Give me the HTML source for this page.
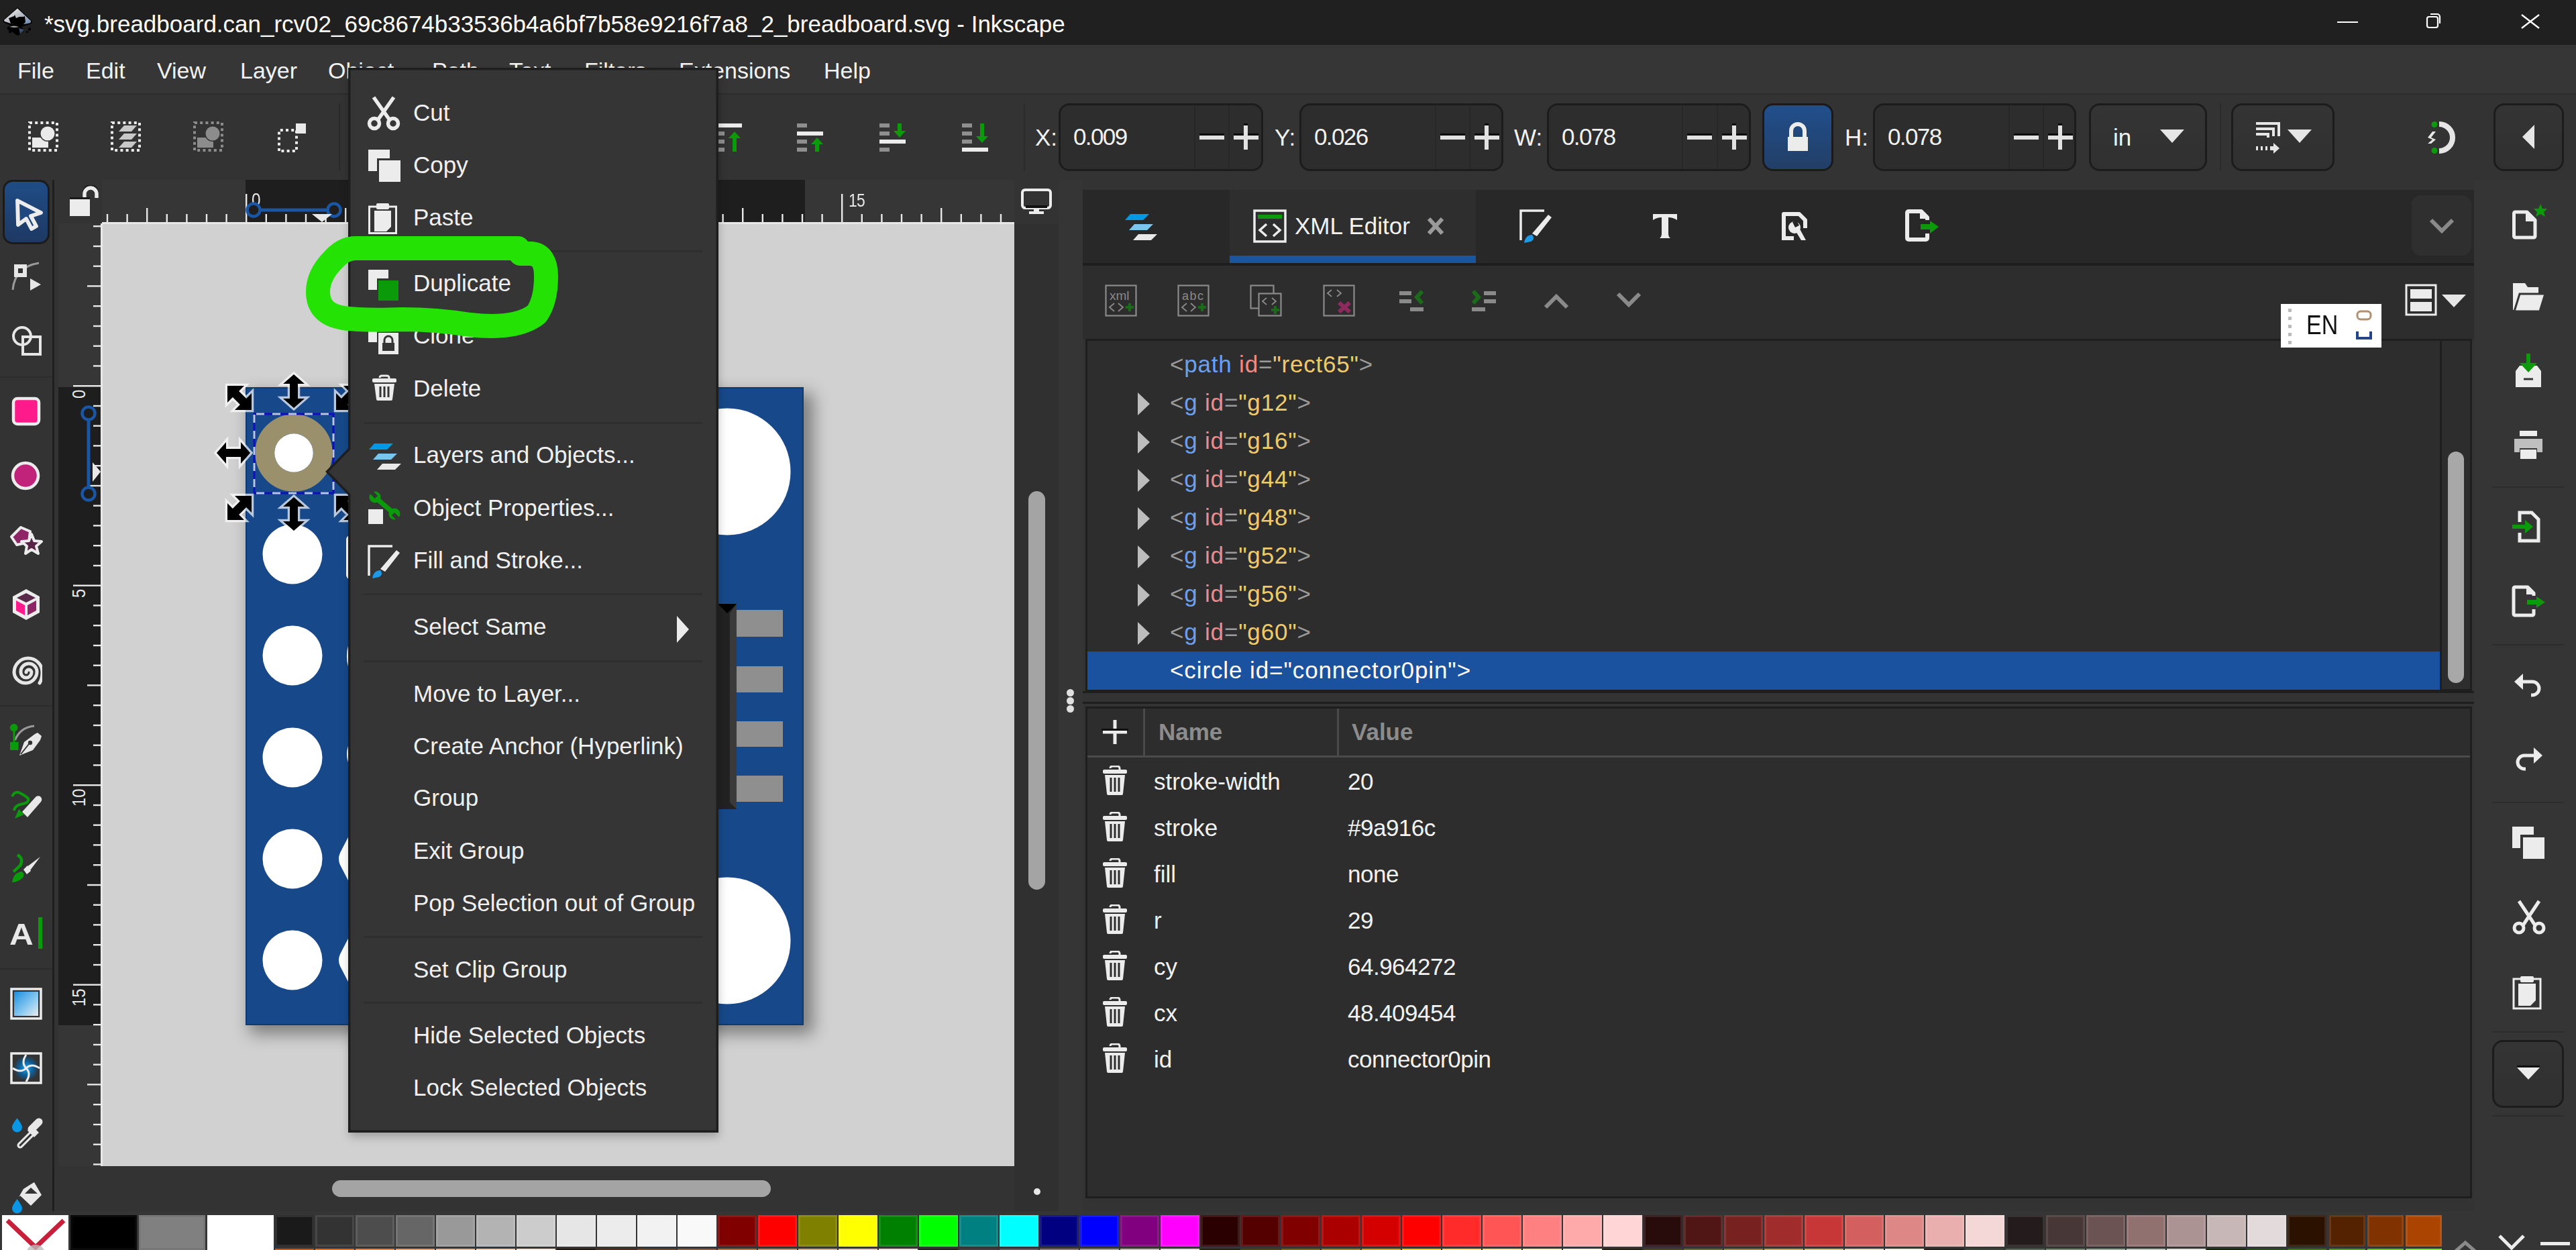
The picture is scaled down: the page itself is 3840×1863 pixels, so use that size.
<!DOCTYPE html><html><head><meta charset="utf-8"><style>
html,body{margin:0;padding:0;width:3840px;height:1863px;overflow:hidden;background:#333;position:relative;font-family:"Liberation Sans",sans-serif}
div{position:absolute;box-sizing:border-box}
.t{white-space:pre;font-family:"Liberation Sans",sans-serif}
</style></head><body>
<div style="left:0px;top:0px;width:3840px;height:67px;background:#202020"></div>
<div style="left:0px;top:67px;width:3840px;height:72px;background:#363636"></div>
<div style="left:0px;top:139px;width:3840px;height:2px;background:#2c2c2c"></div>
<div style="left:0px;top:141px;width:3840px;height:127px;background:#333333"></div>
<div style="left:0px;top:268px;width:78px;height:1537px;background:#333333"></div>
<div style="left:78px;top:268px;width:3px;height:1537px;background:#1f1f1f"></div>
<div style="left:81px;top:268px;width:71px;height:65px;background:#333333"></div>
<div style="left:152px;top:268px;width:1360px;height:65px;background:#363636"></div>
<div style="left:366px;top:268px;width:834px;height:65px;background:#1e1e1e"></div>
<div style="left:87px;top:333px;width:65px;height:1405px;background:#363636"></div>
<div style="left:87px;top:577px;width:65px;height:951px;background:#1e1e1e"></div>
<div style="left:152px;top:333px;width:1360px;height:1405px;background:#d1d1d1"></div>
<div style="left:1512px;top:268px;width:66px;height:1537px;background:#303030"></div>
<div style="left:1512px;top:268px;width:66px;height:66px;background:#333333"></div>
<div style="left:81px;top:1738px;width:1431px;height:67px;background:#333333"></div>
<div style="left:1578px;top:268px;width:36px;height:1543px;background:#353535"></div>
<div style="left:3688px;top:268px;width:152px;height:1543px;background:#353535"></div>
<div style="left:0px;top:1805px;width:3840px;height:58px;background:#353535"></div>
<div class="t" style="left:66px;top:18.4px;font-size:35px;line-height:35px;color:#ffffff;">*svg.breadboard.can_rcv02_69c8674b33536b4a6bf7b58e9216f7a8_2_breadboard.svg - Inkscape</div>
<div style="left:3484px;top:32px;width:31px;height:2px;background:#ffffff"></div>
<svg style="position:absolute;left:3615px;top:18px;" width="32" height="28" viewBox="0 0 32 28"><rect x="3" y="7" width="16" height="16" rx="3" fill="none" stroke="#fff" stroke-width="2.2"/><path d="M8 3 h10 a4 4 0 0 1 4 4 v10" fill="none" stroke="#fff" stroke-width="2.2"/></svg>
<svg style="position:absolute;left:3756px;top:20px;" width="32" height="24" viewBox="0 0 32 24"><path d="M3 2 L29 22 M29 2 L3 22" stroke="#fff" stroke-width="2.4"/></svg>
<div class="t" style="left:26px;top:88.2px;font-size:34px;line-height:34px;color:#f2f2f2;">File</div>
<div class="t" style="left:128px;top:88.2px;font-size:34px;line-height:34px;color:#f2f2f2;">Edit</div>
<div class="t" style="left:234px;top:88.2px;font-size:34px;line-height:34px;color:#f2f2f2;">View</div>
<div class="t" style="left:358px;top:88.2px;font-size:34px;line-height:34px;color:#f2f2f2;">Layer</div>
<div class="t" style="left:489px;top:88.2px;font-size:34px;line-height:34px;color:#f2f2f2;">Object</div>
<div class="t" style="left:644px;top:88.2px;font-size:34px;line-height:34px;color:#f2f2f2;">Path</div>
<div class="t" style="left:759px;top:88.2px;font-size:34px;line-height:34px;color:#f2f2f2;">Text</div>
<div class="t" style="left:871px;top:88.2px;font-size:34px;line-height:34px;color:#f2f2f2;">Filters</div>
<div class="t" style="left:1012px;top:88.2px;font-size:34px;line-height:34px;color:#f2f2f2;">Extensions</div>
<div class="t" style="left:1228px;top:88.2px;font-size:34px;line-height:34px;color:#f2f2f2;">Help</div>
<svg style="position:absolute;left:42px;top:181px;" width="45" height="45" viewBox="0 0 45 45"><rect x="2" y="2" width="41" height="41" fill="none" stroke="#eaeaea" stroke-width="4" stroke-dasharray="4 4.2"/><rect x="6" y="24" width="24" height="15" fill="#eaeaea"/><circle cx="29" cy="18" r="12" fill="#333"/><circle cx="29" cy="18" r="10.5" fill="#eaeaea"/></svg>
<svg style="position:absolute;left:165px;top:181px;" width="45" height="45" viewBox="0 0 45 45"><rect x="2" y="2" width="41" height="41" fill="none" stroke="#eaeaea" stroke-width="4" stroke-dasharray="4 4.2"/><path d="M12 15 L20 6 L39 6 L31 15 Z" fill="#c8c8c8"/><path d="M12 27 L20 18 L39 18 L31 27 Z" fill="#c8c8c8"/><path d="M12 39 L20 30 L39 30 L31 39 Z" fill="#c8c8c8"/></svg>
<svg style="position:absolute;left:288px;top:181px;" width="45" height="45" viewBox="0 0 45 45"><rect x="2" y="2" width="41" height="41" fill="none" stroke="#8c8c8c" stroke-width="4" stroke-dasharray="4 4.2"/><rect x="6" y="24" width="24" height="15" fill="#8c8c8c"/><circle cx="29" cy="18" r="12" fill="#333"/><circle cx="29" cy="18" r="10.5" fill="#8c8c8c"/></svg>
<svg style="position:absolute;left:412px;top:181px;" width="46" height="46" viewBox="0 0 46 46"><path d="M4 44 V13 H30 V44 Z" fill="none" stroke="#eaeaea" stroke-width="4" stroke-dasharray="4 4.2"/><rect x="29" y="3" width="15" height="15" fill="#eaeaea"/></svg>
<div style="left:505px;top:154px;width:2px;height:101px;background:#2b2b2b"></div>
<svg style="position:absolute;left:1066px;top:184px;" width="40" height="42" viewBox="0 0 40 42"><rect x="0" y="0" width="40" height="6" fill="#ececec"/><rect x="0" y="12" width="14" height="6" fill="#8f8f8f"/><rect x="0" y="24" width="14" height="6" fill="#8f8f8f"/><rect x="0" y="36" width="14" height="6" fill="#8f8f8f"/><path d="M20 22 L29 12 L38 22 Z" fill="#0a9a0a"/><rect x="26" y="21" width="6" height="21" fill="#0a9a0a"/></svg>
<svg style="position:absolute;left:1188px;top:184px;" width="40" height="42" viewBox="0 0 40 42"><rect x="0" y="0" width="15" height="6" fill="#8f8f8f"/><rect x="0" y="12" width="39" height="6" fill="#ececec"/><rect x="0" y="24" width="15" height="6" fill="#8f8f8f"/><rect x="0" y="36" width="15" height="6" fill="#8f8f8f"/><path d="M21 31 L30 21 L39 31 Z" fill="#0a9a0a"/><rect x="27" y="30" width="6" height="12" fill="#0a9a0a"/></svg>
<svg style="position:absolute;left:1311px;top:184px;" width="40" height="42" viewBox="0 0 40 42"><rect x="0" y="0" width="15" height="6" fill="#8f8f8f"/><rect x="0" y="12" width="15" height="6" fill="#8f8f8f"/><rect x="0" y="24" width="39" height="6" fill="#ececec"/><rect x="0" y="36" width="15" height="6" fill="#8f8f8f"/><path d="M21 11 L30 21 L39 11 Z" fill="#0a9a0a"/><rect x="27" y="0" width="6" height="12" fill="#0a9a0a"/></svg>
<svg style="position:absolute;left:1434px;top:184px;" width="40" height="42" viewBox="0 0 40 42"><rect x="0" y="0" width="15" height="6" fill="#8f8f8f"/><rect x="0" y="12" width="15" height="6" fill="#8f8f8f"/><rect x="0" y="24" width="15" height="6" fill="#8f8f8f"/><rect x="0" y="36" width="39" height="6" fill="#ececec"/><path d="M21 19 L30 29 L39 19 Z" fill="#0a9a0a"/><rect x="27" y="0" width="6" height="20" fill="#0a9a0a"/></svg>
<div style="left:1526px;top:154px;width:2px;height:101px;background:#2b2b2b"></div>
<div class="t" style="left:1543px;top:187.4px;font-size:35px;line-height:35px;color:#f2f2f2;">X:</div>
<div style="left:1578px;top:154px;width:305px;height:101px;background:#2d2d2d;border:3px solid #1c1c1c;border-radius:16px"></div>
<div style="left:1780px;top:157px;width:2px;height:95px;background:#272727"></div>
<div style="left:1831px;top:157px;width:2px;height:95px;background:#272727"></div>
<div class="t" style="left:1600px;top:186.4px;font-size:35px;line-height:35px;color:#f2f2f2;letter-spacing:-1.6px">0.009</div>
<div style="left:1788px;top:199px;width:37px;height:3px;background:#0a0a0a"></div>
<div style="left:1788px;top:202px;width:37px;height:6px;background:#e2e2e2"></div>
<div style="left:1839px;top:199px;width:37px;height:3px;background:#0a0a0a"></div>
<div style="left:1839px;top:202px;width:37px;height:6px;background:#e2e2e2"></div>
<div style="left:1854px;top:184px;width:6px;height:3px;background:#0a0a0a"></div>
<div style="left:1854px;top:187px;width:6px;height:36px;background:#e2e2e2"></div>
<div class="t" style="left:1900px;top:187.4px;font-size:35px;line-height:35px;color:#f2f2f2;">Y:</div>
<div style="left:1937px;top:154px;width:304px;height:101px;background:#2d2d2d;border:3px solid #1c1c1c;border-radius:16px"></div>
<div style="left:2139px;top:157px;width:2px;height:95px;background:#272727"></div>
<div style="left:2190px;top:157px;width:2px;height:95px;background:#272727"></div>
<div class="t" style="left:1959px;top:186.4px;font-size:35px;line-height:35px;color:#f2f2f2;letter-spacing:-1.6px">0.026</div>
<div style="left:2147px;top:199px;width:37px;height:3px;background:#0a0a0a"></div>
<div style="left:2147px;top:202px;width:37px;height:6px;background:#e2e2e2"></div>
<div style="left:2198px;top:199px;width:37px;height:3px;background:#0a0a0a"></div>
<div style="left:2198px;top:202px;width:37px;height:6px;background:#e2e2e2"></div>
<div style="left:2213px;top:184px;width:6px;height:3px;background:#0a0a0a"></div>
<div style="left:2213px;top:187px;width:6px;height:36px;background:#e2e2e2"></div>
<div class="t" style="left:2257px;top:187.4px;font-size:35px;line-height:35px;color:#f2f2f2;">W:</div>
<div style="left:2306px;top:154px;width:304px;height:101px;background:#2d2d2d;border:3px solid #1c1c1c;border-radius:16px"></div>
<div style="left:2507px;top:157px;width:2px;height:95px;background:#272727"></div>
<div style="left:2559px;top:157px;width:2px;height:95px;background:#272727"></div>
<div class="t" style="left:2328px;top:186.4px;font-size:35px;line-height:35px;color:#f2f2f2;letter-spacing:-1.6px">0.078</div>
<div style="left:2515px;top:199px;width:37px;height:3px;background:#0a0a0a"></div>
<div style="left:2515px;top:202px;width:37px;height:6px;background:#e2e2e2"></div>
<div style="left:2567px;top:199px;width:37px;height:3px;background:#0a0a0a"></div>
<div style="left:2567px;top:202px;width:37px;height:6px;background:#e2e2e2"></div>
<div style="left:2582px;top:184px;width:6px;height:3px;background:#0a0a0a"></div>
<div style="left:2582px;top:187px;width:6px;height:36px;background:#e2e2e2"></div>
<div style="left:2627px;top:154px;width:106px;height:101px;background:linear-gradient(#214f8c,#223e66);border:3px solid #1a1a1a;border-radius:16px"></div>
<svg style="position:absolute;left:2660px;top:182px;" width="40" height="46" viewBox="0 0 40 46"><path d="M10 22 V13 a10 10 0 0 1 20 0 V22" fill="none" stroke="#ececec" stroke-width="6"/><rect x="5" y="22" width="30" height="21" fill="#ececec"/></svg>
<div class="t" style="left:2750px;top:187.4px;font-size:35px;line-height:35px;color:#f2f2f2;">H:</div>
<div style="left:2792px;top:154px;width:303px;height:101px;background:#2d2d2d;border:3px solid #1c1c1c;border-radius:16px"></div>
<div style="left:2994px;top:157px;width:2px;height:95px;background:#272727"></div>
<div style="left:3045px;top:157px;width:2px;height:95px;background:#272727"></div>
<div class="t" style="left:2814px;top:186.4px;font-size:35px;line-height:35px;color:#f2f2f2;letter-spacing:-1.6px">0.078</div>
<div style="left:3002px;top:199px;width:37px;height:3px;background:#0a0a0a"></div>
<div style="left:3002px;top:202px;width:37px;height:6px;background:#e2e2e2"></div>
<div style="left:3053px;top:199px;width:37px;height:3px;background:#0a0a0a"></div>
<div style="left:3053px;top:202px;width:37px;height:6px;background:#e2e2e2"></div>
<div style="left:3068px;top:184px;width:6px;height:3px;background:#0a0a0a"></div>
<div style="left:3068px;top:187px;width:6px;height:36px;background:#e2e2e2"></div>
<div style="left:3114px;top:154px;width:176px;height:101px;background:linear-gradient(#343434,#303030);border:3px solid #1c1c1c;border-radius:16px"></div>
<div class="t" style="left:3150px;top:187.4px;font-size:35px;line-height:35px;color:#f2f2f2;">in</div>
<svg style="position:absolute;left:3218px;top:190px;" width="40" height="26" viewBox="0 0 40 26"><path d="M2 3 H38 L20 23 Z" fill="#e6e6e6"/></svg>
<div style="left:3309px;top:154px;width:2px;height:101px;background:#2b2b2b"></div>
<div style="left:3326px;top:154px;width:154px;height:101px;background:linear-gradient(#343434,#303030);border:3px solid #1c1c1c;border-radius:16px"></div>
<svg style="position:absolute;left:3361px;top:181px;" width="40" height="48" viewBox="0 0 40 48"><path d="M2 3 H36 V22 M2 11 H28 V22 M2 19 H20 V24" fill="none" stroke="#e6e6e6" stroke-width="4"/><path d="M2 40 H5 M9 40 H12 M16 40 H19 M23 40 H30" stroke="#e6e6e6" stroke-width="6"/><path d="M28 32 L37 40 L28 48 Z" fill="#e6e6e6"/></svg>
<svg style="position:absolute;left:3408px;top:190px;" width="40" height="26" viewBox="0 0 40 26"><path d="M2 3 H38 L20 23 Z" fill="#e6e6e6"/></svg>
<svg style="position:absolute;left:3600px;top:170px;" width="80" height="70" viewBox="0 0 80 70"><g transform="translate(-3600,-170)"><path d="M3636 185 A20 20 0 0 1 3636 225" fill="none" stroke="#e6e6e6" stroke-width="8"/><circle cx="3629" cy="185.5" r="4.5" fill="#0a9a0a"/><circle cx="3629" cy="224.5" r="4.5" fill="#0a9a0a"/><path d="M3626 196 L3631 196 L3624 205 L3631 208 L3624 214 L3619 214 L3626 208 L3619 205 Z" fill="#e6e6e6"/></g></svg>
<div style="left:3717px;top:154px;width:105px;height:101px;background:linear-gradient(#343434,#303030);border:3px solid #1c1c1c;border-radius:16px"></div>
<svg style="position:absolute;left:3758px;top:184px;" width="24" height="40" viewBox="0 0 24 40"><path d="M20 2 V38 L2 20 Z" fill="#e6e6e6"/></svg>
<div style="left:4px;top:268px;width:70px;height:96px;background:linear-gradient(#1f4c86,#1e3963);border:3px solid #1b1b1b;border-radius:15px"></div>
<svg style="position:absolute;left:21px;top:295px;" width="46" height="50" viewBox="0 0 46 50"><path d="M5 4 L40 22 L25 27 L33 42 L26 46 L18 31 L6 40 Z" fill="#1f4780" stroke="#ececec" stroke-width="5.8" stroke-linejoin="round"/></svg>
<div style="left:0px;top:561px;width:78px;height:2px;background:#2c2c2c"></div>
<div style="left:0px;top:1051px;width:78px;height:2px;background:#2c2c2c"></div>
<div style="left:0px;top:1443px;width:78px;height:2px;background:#2c2c2c"></div>
<svg style="position:absolute;left:16px;top:388px;" width="48" height="48" viewBox="0 0 48 48"><path d="M3 44 Q6 10 42 4" fill="none" stroke="#9a9a9a" stroke-width="3"/><rect x="8" y="9" width="13" height="13" fill="#333" stroke="#e6e6e6" stroke-width="6"/><path d="M29 27 L45 36 L29 45 Z" fill="#e6e6e6"/></svg>
<svg style="position:absolute;left:16px;top:484px;" width="48" height="48" viewBox="0 0 48 48"><circle cx="17" cy="17" r="13" fill="none" stroke="#e6e6e6" stroke-width="4"/><rect x="18" y="18" width="26" height="26" fill="none" stroke="#e6e6e6" stroke-width="4"/></svg>
<svg style="position:absolute;left:16px;top:590px;" width="46" height="46" viewBox="0 0 46 46"><rect x="4" y="4" width="38" height="38" rx="6" fill="#ff1a8c" stroke="#ececec" stroke-width="4.5"/></svg>
<svg style="position:absolute;left:15px;top:686px;" width="46" height="46" viewBox="0 0 46 46"><circle cx="23" cy="23" r="19" fill="#c2237a" stroke="#ececec" stroke-width="4.5"/></svg>
<svg style="position:absolute;left:13px;top:782px;" width="52" height="46" viewBox="0 0 52 46"><path d="M4 18 L18 4 L32 10 L30 26 L12 30 Z" fill="#8f2466" stroke="#ececec" stroke-width="4" stroke-linejoin="round"/><path d="M34 14 L38 24 L49 25 L41 32 L44 43 L34 37 L25 43 L27 32 L19 25 L30 24 Z" fill="#5a2245" stroke="#ececec" stroke-width="4" stroke-linejoin="round"/></svg>
<svg style="position:absolute;left:15px;top:875px;" width="48" height="52" viewBox="0 0 48 52"><path d="M24 3 L44 14 V38 L24 49 L4 38 V14 Z" fill="#ececec"/><path d="M24 9 L38 16 L24 23 L10 16 Z" fill="#5a2a4a"/><path d="M9 20 L22 27 V42 L9 35 Z" fill="#ff1a8c"/><path d="M39 20 L26 27 V42 L39 35 Z" fill="#8f2466"/></svg>
<svg style="position:absolute;left:15px;top:978px;" width="48" height="44" viewBox="0 0 48 44"><path d="M22 22 m0 0 a4 4 0 0 1 8 0 a8 8 0 0 1 -16 0 a12 12 0 0 1 24 -2 a17 17 0 0 1 -34 2 a21 21 0 0 1 42 0 q0 10 -4 16" fill="none" stroke="#e6e6e6" stroke-width="5" stroke-linecap="round" transform="translate(2,2)"/></svg>
<svg style="position:absolute;left:0px;top:1060px;" width="80" height="360" viewBox="0 0 80 360"><g transform="translate(0,-1060)"><path d="M22.5 1103 Q30 1084 51 1082" fill="none" stroke="#9a9a9a" stroke-width="3"/><circle cx="20.7" cy="1084.5" r="5.8" fill="#0a9a0a"/><rect x="19.5" y="1084" width="3" height="24" fill="#0a9a0a"/><rect x="15" y="1106" width="12.5" height="12" fill="#0a9a0a"/><path d="M29 1126 L36 1106 L52 1094 L56 1092 L62 1097 L60 1103 L49 1118 Z" fill="#e8e8e8"/><path d="M31 1124 L43 1109" stroke="#333" stroke-width="2"/><circle cx="45" cy="1107" r="3.2" fill="#333"/><path d="M18 1187 Q22 1178 30 1182 Q38 1186 42 1190 Q44 1196 34 1198 Q22 1200 21 1208" fill="none" stroke="#0a9a0a" stroke-width="4"/><path d="M33 1210 L53 1188 a5 5 0 0 1 8 7 L41 1218 Z" fill="#e8e8e8"/><path d="M22 1220 L28 1206 L36 1214 Z" fill="#0a9a0a"/><path d="M26 1274 Q36 1280 30 1290 Q24 1296 20 1299" fill="none" stroke="#0a9a0a" stroke-width="4.5"/><path d="M40 1292 L60 1277 L45 1297 Z" fill="#e8e8e8"/><path d="M35 1296 L41 1290 L46 1298 L40 1303 Z" fill="#e8e8e8"/><path d="M18 1315 Q20 1300 33 1299 Q38 1304 33 1309 Q26 1315 18 1315 Z" fill="#0a9a0a"/></g></svg>
<div class="t" style="left:14px;top:1369.9px;font-size:45px;line-height:45px;color:#e8e8e8;font-weight:bold;transform:scaleX(1.1);transform-origin:0 0">A</div>
<div style="left:57px;top:1367px;width:6px;height:47px;background:#0a9a0a"></div>
<svg style="position:absolute;left:15px;top:1472px;" width="48" height="48" viewBox="0 0 48 48"><rect x="2" y="2" width="44" height="44" fill="none" stroke="#ececec" stroke-width="3.5"/><defs><linearGradient id="gg" x1="0" y1="0" x2="1" y2="1"><stop offset="0" stop-color="#1a8fe0"/><stop offset="0.6" stop-color="#8ecbf0"/><stop offset="1" stop-color="#ececec"/></linearGradient></defs><rect x="6" y="6" width="36" height="36" fill="url(#gg)"/></svg>
<svg style="position:absolute;left:15px;top:1568px;" width="48" height="48" viewBox="0 0 48 48"><rect x="2" y="2" width="44" height="44" fill="none" stroke="#ececec" stroke-width="3.5"/><defs><radialGradient id="mg"><stop offset="0" stop-color="#1ea0f0"/><stop offset="0.6" stop-color="#0f5a90"/><stop offset="1" stop-color="#333"/></radialGradient></defs><rect x="5" y="5" width="38" height="38" fill="url(#mg)"/><path d="M24 4 Q16 16 24 24 Q32 32 24 44 M4 24 Q16 32 24 24 Q32 16 44 24" fill="none" stroke="#ececec" stroke-width="3"/></svg>
<svg style="position:absolute;left:0px;top:1650px;" width="80" height="160" viewBox="0 0 80 160"><path d="M25.5 16.5 Q18 26 18 30 a7.5 7.5 0 0 0 15 0 Q33 26 25.5 16.5 Z" fill="#0a96e6"/><path d="M30 57 L50 37" stroke="#e8e8e8" stroke-width="9" stroke-linecap="round"/><path d="M30 57 L50 37" stroke="#333" stroke-width="3" stroke-linecap="round"/><path d="M41 35 L48 28 L58 38 L51 45 Z" fill="#e8e8e8"/><path d="M47 33 L58 22" stroke="#e8e8e8" stroke-width="11" stroke-linecap="round"/><path d="M46 115 L51 112 L62 131 L46 147 L30 132 L28 134 L35 122 Z" fill="#e8e8e8"/><path d="M37 129 L46 120 L56 129 Z" fill="#333"/><path d="M25.5 137 Q18 147 18 151 a7.5 7.5 0 0 0 15 0 Q33 147 25.5 137 Z" fill="#0a96e6"/></svg>
<svg style="position:absolute;left:152px;top:268px;" width="1360" height="65" viewBox="0 0 1360 65"><rect x="6.8" y="51" width="2.4" height="13" fill="#e8e8e8"/><rect x="36.4" y="51" width="2.4" height="13" fill="#e8e8e8"/><rect x="66.0" y="42" width="2.4" height="22" fill="#e8e8e8"/><rect x="95.6" y="51" width="2.4" height="13" fill="#e8e8e8"/><rect x="125.2" y="51" width="2.4" height="13" fill="#e8e8e8"/><rect x="154.8" y="51" width="2.4" height="13" fill="#e8e8e8"/><rect x="184.4" y="51" width="2.4" height="13" fill="#e8e8e8"/><rect x="214.0" y="21" width="2.4" height="43" fill="#e8e8e8"/><rect x="243.6" y="51" width="2.4" height="13" fill="#e8e8e8"/><rect x="273.2" y="51" width="2.4" height="13" fill="#e8e8e8"/><rect x="302.8" y="51" width="2.4" height="13" fill="#e8e8e8"/><rect x="332.4" y="51" width="2.4" height="13" fill="#e8e8e8"/><rect x="362.0" y="42" width="2.4" height="22" fill="#e8e8e8"/><rect x="391.6" y="51" width="2.4" height="13" fill="#e8e8e8"/><rect x="421.2" y="51" width="2.4" height="13" fill="#e8e8e8"/><rect x="450.8" y="51" width="2.4" height="13" fill="#e8e8e8"/><rect x="480.4" y="51" width="2.4" height="13" fill="#e8e8e8"/><rect x="510.0" y="21" width="2.4" height="43" fill="#e8e8e8"/><rect x="539.6" y="51" width="2.4" height="13" fill="#e8e8e8"/><rect x="569.2" y="51" width="2.4" height="13" fill="#e8e8e8"/><rect x="598.8" y="51" width="2.4" height="13" fill="#e8e8e8"/><rect x="628.4" y="51" width="2.4" height="13" fill="#e8e8e8"/><rect x="658.0" y="42" width="2.4" height="22" fill="#e8e8e8"/><rect x="687.6" y="51" width="2.4" height="13" fill="#e8e8e8"/><rect x="717.2" y="51" width="2.4" height="13" fill="#e8e8e8"/><rect x="746.8" y="51" width="2.4" height="13" fill="#e8e8e8"/><rect x="776.4" y="51" width="2.4" height="13" fill="#e8e8e8"/><rect x="806.0" y="21" width="2.4" height="43" fill="#e8e8e8"/><rect x="835.6" y="51" width="2.4" height="13" fill="#e8e8e8"/><rect x="865.2" y="51" width="2.4" height="13" fill="#e8e8e8"/><rect x="894.8" y="51" width="2.4" height="13" fill="#e8e8e8"/><rect x="924.4" y="51" width="2.4" height="13" fill="#e8e8e8"/><rect x="954.0" y="42" width="2.4" height="22" fill="#e8e8e8"/><rect x="983.6" y="51" width="2.4" height="13" fill="#e8e8e8"/><rect x="1013.2" y="51" width="2.4" height="13" fill="#e8e8e8"/><rect x="1042.8" y="51" width="2.4" height="13" fill="#e8e8e8"/><rect x="1072.4" y="51" width="2.4" height="13" fill="#e8e8e8"/><rect x="1102.0" y="21" width="2.4" height="43" fill="#e8e8e8"/><rect x="1131.6" y="51" width="2.4" height="13" fill="#e8e8e8"/><rect x="1161.2" y="51" width="2.4" height="13" fill="#e8e8e8"/><rect x="1190.8" y="51" width="2.4" height="13" fill="#e8e8e8"/><rect x="1220.4" y="51" width="2.4" height="13" fill="#e8e8e8"/><rect x="1250.0" y="42" width="2.4" height="22" fill="#e8e8e8"/><rect x="1279.6" y="51" width="2.4" height="13" fill="#e8e8e8"/><rect x="1309.2" y="51" width="2.4" height="13" fill="#e8e8e8"/><rect x="1338.8" y="51" width="2.4" height="13" fill="#e8e8e8"/></svg>
<div style="left:152px;top:331px;width:1360px;height:3px;background:#e8e8e8"></div>
<div class="t" style="left:375px;top:285.1px;font-size:27px;line-height:27px;color:#e8e8e8;transform:scaleX(0.9);transform-origin:0 0">0</div>
<div class="t" style="left:1265px;top:286.1px;font-size:27px;line-height:27px;color:#e8e8e8;transform:scaleX(0.85);transform-origin:0 0;letter-spacing:-1px">15</div>
<svg style="position:absolute;left:360px;top:298px;" width="152" height="40" viewBox="0 0 152 40"><line x1="18" y1="15" x2="138" y2="15" stroke="#1a56a4" stroke-width="5"/><circle cx="18" cy="15" r="9.5" fill="#1e1e1e" stroke="#1a56a4" stroke-width="4.5"/><circle cx="138" cy="15" r="9.5" fill="#1e1e1e" stroke="#1a56a4" stroke-width="4.5"/><path d="M105 21 L135 21 L120 33 Z" fill="#e8e8e8"/></svg>
<svg style="position:absolute;left:87px;top:333px;" width="65" height="1405" viewBox="0 0 65 1405"><rect x="52" y="3.0" width="13" height="2.4" fill="#e8e8e8"/><rect x="52" y="32.8" width="13" height="2.4" fill="#e8e8e8"/><rect x="52" y="62.5" width="13" height="2.4" fill="#e8e8e8"/><rect x="43" y="92.2" width="22" height="2.4" fill="#e8e8e8"/><rect x="52" y="122.0" width="13" height="2.4" fill="#e8e8e8"/><rect x="52" y="151.8" width="13" height="2.4" fill="#e8e8e8"/><rect x="52" y="181.5" width="13" height="2.4" fill="#e8e8e8"/><rect x="52" y="211.2" width="13" height="2.4" fill="#e8e8e8"/><rect x="22" y="241.0" width="43" height="2.4" fill="#e8e8e8"/><rect x="52" y="270.8" width="13" height="2.4" fill="#e8e8e8"/><rect x="52" y="300.5" width="13" height="2.4" fill="#e8e8e8"/><rect x="52" y="330.2" width="13" height="2.4" fill="#e8e8e8"/><rect x="52" y="360.0" width="13" height="2.4" fill="#e8e8e8"/><rect x="43" y="389.8" width="22" height="2.4" fill="#e8e8e8"/><rect x="52" y="419.5" width="13" height="2.4" fill="#e8e8e8"/><rect x="52" y="449.2" width="13" height="2.4" fill="#e8e8e8"/><rect x="52" y="479.0" width="13" height="2.4" fill="#e8e8e8"/><rect x="52" y="508.8" width="13" height="2.4" fill="#e8e8e8"/><rect x="22" y="538.5" width="43" height="2.4" fill="#e8e8e8"/><rect x="52" y="568.2" width="13" height="2.4" fill="#e8e8e8"/><rect x="52" y="598.0" width="13" height="2.4" fill="#e8e8e8"/><rect x="52" y="627.8" width="13" height="2.4" fill="#e8e8e8"/><rect x="52" y="657.5" width="13" height="2.4" fill="#e8e8e8"/><rect x="43" y="687.2" width="22" height="2.4" fill="#e8e8e8"/><rect x="52" y="717.0" width="13" height="2.4" fill="#e8e8e8"/><rect x="52" y="746.8" width="13" height="2.4" fill="#e8e8e8"/><rect x="52" y="776.5" width="13" height="2.4" fill="#e8e8e8"/><rect x="52" y="806.2" width="13" height="2.4" fill="#e8e8e8"/><rect x="22" y="836.0" width="43" height="2.4" fill="#e8e8e8"/><rect x="52" y="865.8" width="13" height="2.4" fill="#e8e8e8"/><rect x="52" y="895.5" width="13" height="2.4" fill="#e8e8e8"/><rect x="52" y="925.2" width="13" height="2.4" fill="#e8e8e8"/><rect x="52" y="955.0" width="13" height="2.4" fill="#e8e8e8"/><rect x="43" y="984.8" width="22" height="2.4" fill="#e8e8e8"/><rect x="52" y="1014.5" width="13" height="2.4" fill="#e8e8e8"/><rect x="52" y="1044.2" width="13" height="2.4" fill="#e8e8e8"/><rect x="52" y="1074.0" width="13" height="2.4" fill="#e8e8e8"/><rect x="52" y="1103.8" width="13" height="2.4" fill="#e8e8e8"/><rect x="22" y="1133.5" width="43" height="2.4" fill="#e8e8e8"/><rect x="52" y="1163.2" width="13" height="2.4" fill="#e8e8e8"/><rect x="52" y="1193.0" width="13" height="2.4" fill="#e8e8e8"/><rect x="52" y="1222.8" width="13" height="2.4" fill="#e8e8e8"/><rect x="52" y="1252.5" width="13" height="2.4" fill="#e8e8e8"/><rect x="43" y="1282.2" width="22" height="2.4" fill="#e8e8e8"/><rect x="52" y="1312.0" width="13" height="2.4" fill="#e8e8e8"/><rect x="52" y="1341.8" width="13" height="2.4" fill="#e8e8e8"/><rect x="52" y="1371.5" width="13" height="2.4" fill="#e8e8e8"/><rect x="52" y="1401.2" width="13" height="2.4" fill="#e8e8e8"/></svg>
<div style="left:150px;top:333px;width:3px;height:1405px;background:#e8e8e8"></div>
<div class="t" style="left:105px;top:594px;font-size:27px;line-height:27px;color:#e8e8e8;transform-origin:0 0;transform:rotate(-90deg) scaleX(0.88)">0</div>
<div class="t" style="left:105px;top:891px;font-size:27px;line-height:27px;color:#e8e8e8;transform-origin:0 0;transform:rotate(-90deg) scaleX(0.88)">5</div>
<div class="t" style="left:105px;top:1202px;font-size:27px;line-height:27px;color:#e8e8e8;transform-origin:0 0;transform:rotate(-90deg) scaleX(0.88)">10</div>
<div class="t" style="left:105px;top:1500px;font-size:27px;line-height:27px;color:#e8e8e8;transform-origin:0 0;transform:rotate(-90deg) scaleX(0.88)">15</div>
<svg style="position:absolute;left:118px;top:602px;" width="34" height="150" viewBox="0 0 34 150"><line x1="14" y1="14" x2="14" y2="134" stroke="#1a56a4" stroke-width="5"/><circle cx="14" cy="14" r="9.5" fill="#1e1e1e" stroke="#1a56a4" stroke-width="4.5"/><circle cx="14" cy="134" r="9.5" fill="#1e1e1e" stroke="#1a56a4" stroke-width="4.5"/><path d="M20 87 L20 116 L32 101 Z" fill="#e8e8e8"/></svg>
<svg style="position:absolute;left:100px;top:276px;" width="48" height="50" viewBox="0 0 48 50"><path d="M26 22 V13 a9 9 0 0 1 18 0 V19" fill="none" stroke="#1a1a1a" stroke-width="6" transform="translate(0,-2)"/><path d="M26 22 V13 a9 9 0 0 1 18 0 V19" fill="none" stroke="#ececec" stroke-width="5.5"/><rect x="4" y="18" width="30" height="27" fill="#1a1a1a"/><rect x="4" y="21" width="30" height="25" fill="#ececec"/></svg>
<div style="left:372px;top:586px;width:840px;height:955px;background:rgba(0,0,0,0.4);filter:blur(12px)"></div>
<div style="left:366px;top:577px;width:832px;height:951px;background:#17498a;border:2px solid #0f3a70"></div>
<svg style="position:absolute;left:366px;top:577px;" width="832" height="951" viewBox="0 0 832 951"><circle cx="70" cy="249" r="44.5" fill="#ffffff"/><circle cx="70" cy="400" r="44.5" fill="#ffffff"/><circle cx="70" cy="552" r="44.5" fill="#ffffff"/><circle cx="70" cy="703" r="44.5" fill="#ffffff"/><circle cx="70" cy="854" r="44.5" fill="#ffffff"/><circle cx="718" cy="126" r="94.5" fill="#ffffff"/><circle cx="718" cy="825" r="94.5" fill="#ffffff"/><rect x="731" y="332" width="70" height="40" fill="#8f8f8f"/><rect x="731" y="416" width="70" height="39" fill="#8f8f8f"/><rect x="731" y="498" width="70" height="38" fill="#8f8f8f"/><rect x="731" y="579" width="70" height="39" fill="#8f8f8f"/><path d="M704 323 L732 323 L732 629 L704 629 Z" fill="#222"/><path d="M704 323 L732 323 L718 337 Z" fill="#000"/><path d="M732 323 L732 629 L722 619 L722 337 Z" fill="#3a3a3a"/><circle cx="72" cy="98" r="43.2" fill="none" stroke="#9a916c" stroke-width="28.8"/><circle cx="72" cy="98" r="28.8" fill="#fff"/></svg>
<svg style="position:absolute;left:490px;top:600px;" width="34" height="900" viewBox="0 0 34 900"><g transform="translate(-490,-600)" fill="#fff"><rect x="516" y="798" width="12" height="65" rx="6"/><ellipse cx="523" cy="978" rx="6" ry="20"/><ellipse cx="523" cy="1124" rx="6" ry="16"/><path d="M521 1244 L507 1271 Q503 1280 507 1289 L521 1316 Z"/><path d="M521 1395 L507 1422 Q503 1431 507 1440 L521 1467 Z"/></g></svg>
<svg style="position:absolute;left:376px;top:614px;" width="124" height="124" viewBox="0 0 124 124"><rect x="3" y="3" width="118" height="118" fill="none" stroke="#1010c0" stroke-width="3"/><rect x="3" y="3" width="118" height="118" fill="none" stroke="#b8c6e0" stroke-width="3" stroke-dasharray="12 12" stroke-dashoffset="-3"/></svg>
<svg style="position:absolute;left:300px;top:540px;" width="230" height="260" viewBox="0 0 230 260"><path transform="translate(138,43) rotate(90)" d="M-25 0 L-11 -16 L-11 -6 L11 -6 L11 -16 L25 0 L11 16 L11 6 L-11 6 L-11 16 Z" fill="#000" stroke="rgba(255,255,255,0.7)" stroke-width="6.5" stroke-linejoin="miter" paint-order="stroke"/><path transform="translate(138,226) rotate(90)" d="M-25 0 L-11 -16 L-11 -6 L11 -6 L11 -16 L25 0 L11 16 L11 6 L-11 6 L-11 16 Z" fill="#000" stroke="rgba(255,255,255,0.7)" stroke-width="6.5" stroke-linejoin="miter" paint-order="stroke"/><path transform="translate(48,135) rotate(0)" d="M-25 0 L-11 -16 L-11 -6 L11 -6 L11 -16 L25 0 L11 16 L11 6 L-11 6 L-11 16 Z" fill="#000" stroke="rgba(255,255,255,0.7)" stroke-width="6.5" stroke-linejoin="miter" paint-order="stroke"/><path d="M39.0 35.0 L64.0 35.0 L56.1 42.9 L67.1 53.9 L75.0 46.0 L75.0 71.0 L50.0 71.0 L57.9 63.1 L46.9 52.1 L39.0 60.0 Z" fill="#000" stroke="rgba(255,255,255,0.7)" stroke-width="6.5" stroke-linejoin="miter" paint-order="stroke"/><path d="M237.0 35.0 L212.0 35.0 L219.9 42.9 L208.9 53.9 L201.0 46.0 L201.0 71.0 L226.0 71.0 L218.1 63.1 L229.1 52.1 L237.0 60.0 Z" fill="#000" stroke="rgba(255,255,255,0.7)" stroke-width="6.5" stroke-linejoin="miter" paint-order="stroke"/><path d="M39.0 235.0 L64.0 235.0 L56.1 227.1 L67.1 216.1 L75.0 224.0 L75.0 199.0 L50.0 199.0 L57.9 206.9 L46.9 217.9 L39.0 210.0 Z" fill="#000" stroke="rgba(255,255,255,0.7)" stroke-width="6.5" stroke-linejoin="miter" paint-order="stroke"/><path d="M237.0 235.0 L212.0 235.0 L219.9 227.1 L208.9 216.1 L201.0 224.0 L201.0 199.0 L226.0 199.0 L218.1 206.9 L229.1 217.9 L237.0 210.0 Z" fill="#000" stroke="rgba(255,255,255,0.7)" stroke-width="6.5" stroke-linejoin="miter" paint-order="stroke"/></svg>
<div style="left:495px;top:1759px;width:654px;height:25px;background:#a4a4a4;border-radius:13px"></div>
<div style="left:1533px;top:732px;width:25px;height:594px;background:#a4a4a4;border-radius:13px"></div>
<svg style="position:absolute;left:1521px;top:280px;" width="48" height="42" viewBox="0 0 48 42"><rect x="3" y="3" width="42" height="27" rx="4" fill="none" stroke="#ececec" stroke-width="4"/><rect x="8" y="26" width="32" height="4" fill="#111"/><rect x="20" y="30" width="8" height="5" fill="#ececec"/><rect x="13" y="35" width="22" height="4" fill="#ececec"/></svg>
<div style="left:1541px;top:1771px;width:10px;height:10px;background:#e8e8e8;border-radius:5px"></div>
<div style="left:1614px;top:283px;width:2074px;height:110px;background:#282828"></div>
<div style="left:1833px;top:283px;width:367px;height:110px;background:#2e2e2e"></div>
<div style="left:1833px;top:381px;width:367px;height:12px;background:#1a55a0"></div>
<div style="left:1614px;top:392px;width:2074px;height:4px;background:#1e1e1e"></div>
<div style="left:1614px;top:396px;width:2074px;height:110px;background:#2d2d2d"></div>
<svg style="position:absolute;left:1676px;top:318px;" width="50" height="42" viewBox="0 0 50 42"><path d="M9 1 H37 L28 10 H1 Z" fill="#0099e6"/><path d="M15 16 H43 L34 25 H7 Z" fill="#78c6ee"/><path d="M21 31 H49 L40 40 H13 Z" fill="#e8e8e8"/></svg>
<svg style="position:absolute;left:1867px;top:311px;" width="52" height="52" viewBox="0 0 52 52"><rect x="3" y="3" width="46" height="46" fill="none" stroke="#ececec" stroke-width="3.5"/><rect x="8" y="9" width="36" height="6" fill="#0a9a0a"/><path d="M21 23 L11 32 L21 41 M31 23 L41 32 L31 41" fill="none" stroke="#ececec" stroke-width="3.5"/></svg>
<div class="t" style="left:1930px;top:319.4px;font-size:35px;line-height:35px;color:#f2f2f2;">XML Editor</div>
<svg style="position:absolute;left:2126px;top:322px;" width="28" height="30" viewBox="0 0 28 30"><path d="M4 4 L24 26 M24 4 L4 26" stroke="#9a9a9a" stroke-width="6"/></svg>
<svg style="position:absolute;left:2264px;top:310px;" width="52" height="52" viewBox="0 0 52 52"><path d="M3 48 V4 H38" fill="none" stroke="#ececec" stroke-width="3.5"/><path d="M20 38 L44 10 L49 14 L27 42 Z" fill="#ececec"/><path d="M8 52 Q10 40 20 40 Q25 46 18 50 Z" fill="#1a9ae8"/></svg>
<svg style="position:absolute;left:2464px;top:319px;" width="36" height="36" viewBox="0 0 36 36"><path d="M0 0 H36 V9 Q30 5 23 5 V29 Q23 34 26 36 H10 Q13 34 13 29 V5 Q6 5 0 9 Z" fill="#ececec"/></svg>
<svg style="position:absolute;left:2656px;top:316px;" width="38" height="44" viewBox="0 0 38 44"><path d="M3 22 V3 H26 L35 12 V24" fill="none" stroke="#ececec" stroke-width="6" stroke-linejoin="round"/><path d="M3 20 V39 H18" fill="none" stroke="#ececec" stroke-width="6"/><circle cx="19" cy="23" r="9" fill="#ececec"/><path d="M18 24 L29 42 H36 L24 20 Z" fill="#ececec"/><path d="M22 12 L26 20 L20 23 L16 15 Z" fill="#262626"/></svg>
<svg style="position:absolute;left:2840px;top:312px;" width="52" height="48" viewBox="0 0 52 48"><path d="M33 16 V12 L24 3 H5 a2 2 0 0 0 -2 2 V43 a2 2 0 0 0 2 2 H31 a2 2 0 0 0 2 -2 V36" fill="none" stroke="#ececec" stroke-width="6" stroke-linejoin="round"/><path d="M22 2 V14 H34 Z" fill="#ececec"/><rect x="23" y="22" width="16" height="8" fill="#0a9a0a"/><path d="M37 17 L50 26 L37 36 Z" fill="#0a9a0a"/></svg>
<div style="left:3595px;top:291px;width:89px;height:90px;background:#2f2f2f;border-radius:14px"></div>
<svg style="position:absolute;left:3620px;top:322px;" width="40" height="28" viewBox="0 0 40 28"><path d="M4 6 L20 22 L36 6" fill="none" stroke="#8a8a8a" stroke-width="6"/></svg>
<svg style="position:absolute;left:1647px;top:424px;" width="48" height="48" viewBox="0 0 48 48"><rect x="1.5" y="1.5" width="45" height="45" fill="none" stroke="#8a8a8a" stroke-width="2.2"/><text x="7" y="23" font-family="Liberation Sans" font-size="19" fill="#8a8a8a">xml</text><path d="M14 28 L7 34 L14 40 M20 28 L27 34 L20 40" fill="none" stroke="#8a8a8a" stroke-width="1.8"/><path d="M31 34 H43 M37 28 V40" stroke="#1b6b1b" stroke-width="4"/></svg>
<svg style="position:absolute;left:1755px;top:424px;" width="48" height="48" viewBox="0 0 48 48"><rect x="1.5" y="1.5" width="45" height="45" fill="none" stroke="#8a8a8a" stroke-width="2.2"/><text x="7" y="23" font-family="Liberation Sans" font-size="18" fill="#8a8a8a" letter-spacing="1.5">abc</text><path d="M14 28 L7 34 L14 40 M20 28 L27 34 L20 40" fill="none" stroke="#8a8a8a" stroke-width="1.8"/><path d="M31 34 H43 M37 28 V40" stroke="#1b6b1b" stroke-width="4"/></svg>
<svg style="position:absolute;left:1863px;top:424px;" width="48" height="48" viewBox="0 0 48 48"><rect x="1.5" y="1.5" width="34" height="34" fill="none" stroke="#8a8a8a" stroke-width="2.2"/><rect x="13.5" y="13.5" width="33" height="33" fill="#2d2d2d" stroke="#8a8a8a" stroke-width="2.2"/><path d="M25 20 L19 25 L25 30 M33 20 L39 25 L33 30" fill="none" stroke="#8a8a8a" stroke-width="1.8"/><path d="M32 38 H44 M38 32 V44" stroke="#1b6b1b" stroke-width="4"/></svg>
<svg style="position:absolute;left:1972px;top:424px;" width="48" height="48" viewBox="0 0 48 48"><rect x="1.5" y="1.5" width="45" height="45" fill="none" stroke="#8a8a8a" stroke-width="2.2"/><path d="M13 8 L7 13 L13 18 M21 8 L27 13 L21 18" fill="none" stroke="#8a8a8a" stroke-width="1.8"/><path d="M24 27 L40 41 M40 27 L24 41" stroke="#8e2a5e" stroke-width="6"/></svg>
<svg style="position:absolute;left:2086px;top:432px;" width="40" height="34" viewBox="0 0 40 34"><rect x="0" y="2" width="18" height="6" fill="#8a8a8a"/><rect x="0" y="14" width="18" height="6" fill="#8a8a8a"/><rect x="16" y="26" width="20" height="6" fill="#8a8a8a"/><path d="M34 2 L26 11 L34 20" fill="none" stroke="#1b6b1b" stroke-width="6"/></svg>
<svg style="position:absolute;left:2194px;top:432px;" width="40" height="34" viewBox="0 0 40 34"><rect x="18" y="2" width="18" height="6" fill="#8a8a8a"/><rect x="18" y="14" width="18" height="6" fill="#8a8a8a"/><rect x="0" y="26" width="20" height="6" fill="#8a8a8a"/><path d="M2 2 L10 11 L2 20" fill="none" stroke="#1b6b1b" stroke-width="6"/></svg>
<svg style="position:absolute;left:2300px;top:434px;" width="40" height="30" viewBox="0 0 40 30"><path d="M4 24 L20 8 L36 24" fill="none" stroke="#8a8a8a" stroke-width="6"/></svg>
<svg style="position:absolute;left:2408px;top:432px;" width="40" height="30" viewBox="0 0 40 30"><path d="M4 6 L20 22 L36 6" fill="none" stroke="#8a8a8a" stroke-width="6"/></svg>
<svg style="position:absolute;left:3584px;top:422px;" width="50" height="50" viewBox="0 0 50 50"><rect x="3" y="3" width="44" height="44" fill="none" stroke="#ececec" stroke-width="3"/><rect x="9" y="9" width="32" height="14" fill="#ececec"/><rect x="9" y="28" width="32" height="14" fill="#ececec"/></svg>
<svg style="position:absolute;left:3638px;top:436px;" width="40" height="24" viewBox="0 0 40 24"><path d="M2 3 H38 L20 22 Z" fill="#e6e6e6"/></svg>
<div style="left:1618px;top:505px;width:2067px;height:525px;background:#2d2d2d;border:3px solid #1e1e1e"></div>
<div style="left:3637px;top:508px;width:3px;height:519px;background:#1e1e1e"></div>
<div style="left:3649px;top:673px;width:24px;height:345px;background:#a8a8a8;border-radius:12px"></div>
<div class="t" style="left:1744px;top:525.4px;font-size:35px;line-height:35px;color:#9b9b9b;letter-spacing:0.8px"><span style="color:#9b9b9b">&lt;</span><span style="color:#6aa0f0">path</span><span style="color:#9b9b9b"> </span><span style="color:#f08a8a">id</span><span style="color:#9b9b9b">=</span><span style="color:#f0ca6a">&quot;rect65&quot;</span><span style="color:#9b9b9b">&gt;</span></div>
<div class="t" style="left:1744px;top:582.4px;font-size:35px;line-height:35px;color:#9b9b9b;letter-spacing:0.8px"><span style="color:#9b9b9b">&lt;</span><span style="color:#6aa0f0">g</span><span style="color:#9b9b9b"> </span><span style="color:#f08a8a">id</span><span style="color:#9b9b9b">=</span><span style="color:#f0ca6a">&quot;g12&quot;</span><span style="color:#9b9b9b">&gt;</span></div>
<svg style="position:absolute;left:1694px;top:583px;" width="22" height="38" viewBox="0 0 22 38"><path d="M2 2 L20 19 L2 36 Z" fill="#bdbdbd"/></svg>
<div class="t" style="left:1744px;top:639.4px;font-size:35px;line-height:35px;color:#9b9b9b;letter-spacing:0.8px"><span style="color:#9b9b9b">&lt;</span><span style="color:#6aa0f0">g</span><span style="color:#9b9b9b"> </span><span style="color:#f08a8a">id</span><span style="color:#9b9b9b">=</span><span style="color:#f0ca6a">&quot;g16&quot;</span><span style="color:#9b9b9b">&gt;</span></div>
<svg style="position:absolute;left:1694px;top:640px;" width="22" height="38" viewBox="0 0 22 38"><path d="M2 2 L20 19 L2 36 Z" fill="#bdbdbd"/></svg>
<div class="t" style="left:1744px;top:696.4px;font-size:35px;line-height:35px;color:#9b9b9b;letter-spacing:0.8px"><span style="color:#9b9b9b">&lt;</span><span style="color:#6aa0f0">g</span><span style="color:#9b9b9b"> </span><span style="color:#f08a8a">id</span><span style="color:#9b9b9b">=</span><span style="color:#f0ca6a">&quot;g44&quot;</span><span style="color:#9b9b9b">&gt;</span></div>
<svg style="position:absolute;left:1694px;top:697px;" width="22" height="38" viewBox="0 0 22 38"><path d="M2 2 L20 19 L2 36 Z" fill="#bdbdbd"/></svg>
<div class="t" style="left:1744px;top:753.4px;font-size:35px;line-height:35px;color:#9b9b9b;letter-spacing:0.8px"><span style="color:#9b9b9b">&lt;</span><span style="color:#6aa0f0">g</span><span style="color:#9b9b9b"> </span><span style="color:#f08a8a">id</span><span style="color:#9b9b9b">=</span><span style="color:#f0ca6a">&quot;g48&quot;</span><span style="color:#9b9b9b">&gt;</span></div>
<svg style="position:absolute;left:1694px;top:754px;" width="22" height="38" viewBox="0 0 22 38"><path d="M2 2 L20 19 L2 36 Z" fill="#bdbdbd"/></svg>
<div class="t" style="left:1744px;top:810.4px;font-size:35px;line-height:35px;color:#9b9b9b;letter-spacing:0.8px"><span style="color:#9b9b9b">&lt;</span><span style="color:#6aa0f0">g</span><span style="color:#9b9b9b"> </span><span style="color:#f08a8a">id</span><span style="color:#9b9b9b">=</span><span style="color:#f0ca6a">&quot;g52&quot;</span><span style="color:#9b9b9b">&gt;</span></div>
<svg style="position:absolute;left:1694px;top:811px;" width="22" height="38" viewBox="0 0 22 38"><path d="M2 2 L20 19 L2 36 Z" fill="#bdbdbd"/></svg>
<div class="t" style="left:1744px;top:867.4px;font-size:35px;line-height:35px;color:#9b9b9b;letter-spacing:0.8px"><span style="color:#9b9b9b">&lt;</span><span style="color:#6aa0f0">g</span><span style="color:#9b9b9b"> </span><span style="color:#f08a8a">id</span><span style="color:#9b9b9b">=</span><span style="color:#f0ca6a">&quot;g56&quot;</span><span style="color:#9b9b9b">&gt;</span></div>
<svg style="position:absolute;left:1694px;top:868px;" width="22" height="38" viewBox="0 0 22 38"><path d="M2 2 L20 19 L2 36 Z" fill="#bdbdbd"/></svg>
<div class="t" style="left:1744px;top:924.4px;font-size:35px;line-height:35px;color:#9b9b9b;letter-spacing:0.8px"><span style="color:#9b9b9b">&lt;</span><span style="color:#6aa0f0">g</span><span style="color:#9b9b9b"> </span><span style="color:#f08a8a">id</span><span style="color:#9b9b9b">=</span><span style="color:#f0ca6a">&quot;g60&quot;</span><span style="color:#9b9b9b">&gt;</span></div>
<svg style="position:absolute;left:1694px;top:925px;" width="22" height="38" viewBox="0 0 22 38"><path d="M2 2 L20 19 L2 36 Z" fill="#bdbdbd"/></svg>
<div style="left:1621px;top:971px;width:2016px;height:57px;background:#1a52a0"></div>
<div class="t" style="left:1744px;top:981.4px;font-size:35px;line-height:35px;color:#ffffff;letter-spacing:0.9px">&lt;circle id=&quot;connector0pin&quot;&gt;</div>
<div style="left:1614px;top:1030px;width:2074px;height:3px;background:#1e1e1e"></div>
<div style="left:1614px;top:1046px;width:2074px;height:3px;background:#1e1e1e"></div>
<div style="left:1590px;top:1027px;width:11px;height:11px;background:#e0e0e0;border-radius:6px"></div>
<div style="left:1590px;top:1039px;width:11px;height:11px;background:#e0e0e0;border-radius:6px"></div>
<div style="left:1590px;top:1051px;width:11px;height:11px;background:#e0e0e0;border-radius:6px"></div>
<div style="left:1618px;top:1053px;width:2067px;height:733px;background:#2d2d2d;border:3px solid #1e1e1e"></div>
<div style="left:1621px;top:1126px;width:2061px;height:3px;background:#4a4a4a"></div>
<div style="left:1704px;top:1056px;width:3px;height:70px;background:#4a4a4a"></div>
<div style="left:1993px;top:1056px;width:3px;height:70px;background:#4a4a4a"></div>
<svg style="position:absolute;left:1642px;top:1070px;" width="40" height="40" viewBox="0 0 40 40"><path d="M2 21 H38 M20 3 V39" stroke="#ececec" stroke-width="5"/><rect x="0" y="16" width="40" height="3" fill="#111"/></svg>
<div class="t" style="left:1727px;top:1073.4px;font-size:35px;line-height:35px;color:#8c8c8c;font-weight:bold">Name</div>
<div class="t" style="left:2015px;top:1073.4px;font-size:35px;line-height:35px;color:#8c8c8c;font-weight:bold">Value</div>
<svg style="position:absolute;left:1643px;top:1141px;" width="38" height="44" viewBox="0 0 38 44"><path d="M12 4 a3 3 0 0 1 3 -3 h8 a3 3 0 0 1 3 3 v3" fill="none" stroke="#ececec" stroke-width="3"/><rect x="1" y="6" width="36" height="6" rx="2" fill="#ececec"/><path d="M4 14 H34 L31 42 a2 2 0 0 1 -2 2 H9 a2 2 0 0 1 -2 -2 Z" fill="#ececec"/><path d="M13 18 V39 M19 18 V39 M25 18 V39" stroke="#2d2d2d" stroke-width="3"/></svg>
<div class="t" style="left:1720px;top:1147.4px;font-size:35px;line-height:35px;color:#f2f2f2;">stroke-width</div>
<div class="t" style="left:2009px;top:1147.4px;font-size:35px;line-height:35px;color:#f2f2f2;letter-spacing:-0.5px">20</div>
<svg style="position:absolute;left:1643px;top:1210px;" width="38" height="44" viewBox="0 0 38 44"><path d="M12 4 a3 3 0 0 1 3 -3 h8 a3 3 0 0 1 3 3 v3" fill="none" stroke="#ececec" stroke-width="3"/><rect x="1" y="6" width="36" height="6" rx="2" fill="#ececec"/><path d="M4 14 H34 L31 42 a2 2 0 0 1 -2 2 H9 a2 2 0 0 1 -2 -2 Z" fill="#ececec"/><path d="M13 18 V39 M19 18 V39 M25 18 V39" stroke="#2d2d2d" stroke-width="3"/></svg>
<div class="t" style="left:1720px;top:1216.4px;font-size:35px;line-height:35px;color:#f2f2f2;">stroke</div>
<div class="t" style="left:2009px;top:1216.4px;font-size:35px;line-height:35px;color:#f2f2f2;letter-spacing:-0.5px">#9a916c</div>
<svg style="position:absolute;left:1643px;top:1279px;" width="38" height="44" viewBox="0 0 38 44"><path d="M12 4 a3 3 0 0 1 3 -3 h8 a3 3 0 0 1 3 3 v3" fill="none" stroke="#ececec" stroke-width="3"/><rect x="1" y="6" width="36" height="6" rx="2" fill="#ececec"/><path d="M4 14 H34 L31 42 a2 2 0 0 1 -2 2 H9 a2 2 0 0 1 -2 -2 Z" fill="#ececec"/><path d="M13 18 V39 M19 18 V39 M25 18 V39" stroke="#2d2d2d" stroke-width="3"/></svg>
<div class="t" style="left:1720px;top:1285.4px;font-size:35px;line-height:35px;color:#f2f2f2;">fill</div>
<div class="t" style="left:2009px;top:1285.4px;font-size:35px;line-height:35px;color:#f2f2f2;letter-spacing:-0.5px">none</div>
<svg style="position:absolute;left:1643px;top:1348px;" width="38" height="44" viewBox="0 0 38 44"><path d="M12 4 a3 3 0 0 1 3 -3 h8 a3 3 0 0 1 3 3 v3" fill="none" stroke="#ececec" stroke-width="3"/><rect x="1" y="6" width="36" height="6" rx="2" fill="#ececec"/><path d="M4 14 H34 L31 42 a2 2 0 0 1 -2 2 H9 a2 2 0 0 1 -2 -2 Z" fill="#ececec"/><path d="M13 18 V39 M19 18 V39 M25 18 V39" stroke="#2d2d2d" stroke-width="3"/></svg>
<div class="t" style="left:1720px;top:1354.4px;font-size:35px;line-height:35px;color:#f2f2f2;">r</div>
<div class="t" style="left:2009px;top:1354.4px;font-size:35px;line-height:35px;color:#f2f2f2;letter-spacing:-0.5px">29</div>
<svg style="position:absolute;left:1643px;top:1417px;" width="38" height="44" viewBox="0 0 38 44"><path d="M12 4 a3 3 0 0 1 3 -3 h8 a3 3 0 0 1 3 3 v3" fill="none" stroke="#ececec" stroke-width="3"/><rect x="1" y="6" width="36" height="6" rx="2" fill="#ececec"/><path d="M4 14 H34 L31 42 a2 2 0 0 1 -2 2 H9 a2 2 0 0 1 -2 -2 Z" fill="#ececec"/><path d="M13 18 V39 M19 18 V39 M25 18 V39" stroke="#2d2d2d" stroke-width="3"/></svg>
<div class="t" style="left:1720px;top:1423.4px;font-size:35px;line-height:35px;color:#f2f2f2;">cy</div>
<div class="t" style="left:2009px;top:1423.4px;font-size:35px;line-height:35px;color:#f2f2f2;letter-spacing:-0.5px">64.964272</div>
<svg style="position:absolute;left:1643px;top:1486px;" width="38" height="44" viewBox="0 0 38 44"><path d="M12 4 a3 3 0 0 1 3 -3 h8 a3 3 0 0 1 3 3 v3" fill="none" stroke="#ececec" stroke-width="3"/><rect x="1" y="6" width="36" height="6" rx="2" fill="#ececec"/><path d="M4 14 H34 L31 42 a2 2 0 0 1 -2 2 H9 a2 2 0 0 1 -2 -2 Z" fill="#ececec"/><path d="M13 18 V39 M19 18 V39 M25 18 V39" stroke="#2d2d2d" stroke-width="3"/></svg>
<div class="t" style="left:1720px;top:1492.4px;font-size:35px;line-height:35px;color:#f2f2f2;">cx</div>
<div class="t" style="left:2009px;top:1492.4px;font-size:35px;line-height:35px;color:#f2f2f2;letter-spacing:-0.5px">48.409454</div>
<svg style="position:absolute;left:1643px;top:1555px;" width="38" height="44" viewBox="0 0 38 44"><path d="M12 4 a3 3 0 0 1 3 -3 h8 a3 3 0 0 1 3 3 v3" fill="none" stroke="#ececec" stroke-width="3"/><rect x="1" y="6" width="36" height="6" rx="2" fill="#ececec"/><path d="M4 14 H34 L31 42 a2 2 0 0 1 -2 2 H9 a2 2 0 0 1 -2 -2 Z" fill="#ececec"/><path d="M13 18 V39 M19 18 V39 M25 18 V39" stroke="#2d2d2d" stroke-width="3"/></svg>
<div class="t" style="left:1720px;top:1561.4px;font-size:35px;line-height:35px;color:#f2f2f2;">id</div>
<div class="t" style="left:2009px;top:1561.4px;font-size:35px;line-height:35px;color:#f2f2f2;letter-spacing:-0.5px">connector0pin</div>
<div style="left:3400px;top:453px;width:150px;height:65px;background:#ffffff"></div>
<div class="t" style="left:3438px;top:464.1px;font-size:40px;line-height:40px;color:#111;transform:scaleX(0.85);transform-origin:0 0">EN</div>
<svg style="position:absolute;left:3410px;top:458px;" width="10" height="58" viewBox="0 0 10 58"><rect x="1" y="2" width="5" height="5" fill="#bbb"/><rect x="1" y="14" width="5" height="5" fill="#bbb"/><rect x="1" y="26" width="5" height="5" fill="#bbb"/><rect x="1" y="38" width="5" height="5" fill="#bbb"/><rect x="1" y="50" width="5" height="5" fill="#bbb"/></svg>
<svg style="position:absolute;left:3512px;top:462px;" width="26" height="50" viewBox="0 0 26 50"><rect x="2" y="2" width="20" height="12" rx="5" fill="none" stroke="#b09070" stroke-width="3"/><path d="M2 32 V42 H22 V32" fill="none" stroke="#224488" stroke-width="4"/></svg>
<svg style="position:absolute;left:3743px;top:300px;" width="56" height="58" viewBox="0 0 56 58"><path d="M4.5 18 a2 2 0 0 1 2 -2 H24 L36 28 V52 a2 2 0 0 1 -2 2 H6.5 a2 2 0 0 1 -2 -2 Z" fill="none" stroke="#ececec" stroke-width="5" stroke-linejoin="round"/><path d="M22 15 V30 H37 Z" fill="#ececec"/><path d="M44 4 L47 11 L54 11 L49 16 L51 23 L44 19 L37 23 L39 16 L34 11 L41 11 Z" fill="#0a9a0a"/></svg>
<svg style="position:absolute;left:3744px;top:418px;" width="50" height="48" viewBox="0 0 50 48"><path d="M2 4 H20 L24 10 H40 V44 H2 Z" fill="#ececec"/><path d="M12 20 H50 L42 46 H4 Z" fill="#ececec" stroke="#353535" stroke-width="3"/></svg>
<svg style="position:absolute;left:3746px;top:527px;" width="46" height="52" viewBox="0 0 46 52"><path d="M4 26 L10 18 H36 L42 26 V50 H4 Z" fill="#ececec"/><path d="M16 38 H30" stroke="#353535" stroke-width="3"/><rect x="20" y="0" width="6" height="16" fill="#0a9a0a"/><path d="M10 14 H36 L23 28 Z" fill="#0a9a0a"/></svg>
<svg style="position:absolute;left:3746px;top:640px;" width="46" height="46" viewBox="0 0 46 46"><rect x="10" y="2" width="26" height="8" fill="#ececec"/><path d="M2 14 H44 V34 H36 V28 H10 V34 H2 Z" fill="#bfbfbf" rx="4"/><rect x="11" y="30" width="24" height="14" fill="#ececec"/></svg>
<div style="left:3715px;top:725px;width:107px;height:2px;background:#2c2c2c"></div>
<svg style="position:absolute;left:3744px;top:760px;" width="50" height="50" viewBox="0 0 50 50"><path d="M12 18 V4 H30 L40 14 V46 H12 V34" fill="none" stroke="#ececec" stroke-width="5"/><rect x="1" y="22" width="22" height="6" fill="#0a9a0a"/><path d="M20 15 L32 25 L20 35 Z" fill="#0a9a0a"/></svg>
<svg style="position:absolute;left:3744px;top:872px;" width="52" height="48" viewBox="0 0 52 48"><path d="M33 16 V12 L24 3 H5 a2 2 0 0 0 -2 2 V43 a2 2 0 0 0 2 2 H31 a2 2 0 0 0 2 -2 V36" fill="none" stroke="#ececec" stroke-width="5" stroke-linejoin="round"/><path d="M22 2 V14 H34 Z" fill="#ececec"/><rect x="23" y="22" width="16" height="7" fill="#0a9a0a"/><path d="M37 17 L50 25.5 L37 34 Z" fill="#0a9a0a"/></svg>
<div style="left:3715px;top:960px;width:107px;height:2px;background:#2c2c2c"></div>
<svg style="position:absolute;left:3747px;top:1002px;" width="44" height="40" viewBox="0 0 44 40"><path d="M8 14 H28 a10 10 0 0 1 0 20 H26" fill="none" stroke="#ececec" stroke-width="5"/><path d="M14 2 L1 14 L14 26 Z" fill="#ececec"/></svg>
<svg style="position:absolute;left:3747px;top:1112px;" width="44" height="40" viewBox="0 0 44 40"><path d="M36 14 H16 a10 10 0 0 0 0 20 H18" fill="none" stroke="#ececec" stroke-width="5"/><path d="M30 2 L43 14 L30 26 Z" fill="#ececec"/></svg>
<div style="left:3715px;top:1195px;width:107px;height:2px;background:#2c2c2c"></div>
<svg style="position:absolute;left:3745px;top:1232px;" width="50" height="50" viewBox="0 0 50 50"><rect x="0" y="0" width="32" height="32" fill="#ececec"/><rect x="12" y="12" width="36" height="36" fill="#353535"/><rect x="16" y="16" width="32" height="32" fill="#ececec"/></svg>
<svg style="position:absolute;left:3745px;top:1341px;" width="50" height="52" viewBox="0 0 50 52"><path d="M10 2 L34 38 M40 2 L16 38" stroke="#ececec" stroke-width="5"/><circle cx="10" cy="42" r="7" fill="none" stroke="#ececec" stroke-width="5"/><circle cx="40" cy="42" r="7" fill="none" stroke="#ececec" stroke-width="5"/></svg>
<svg style="position:absolute;left:3745px;top:1455px;" width="44" height="50" viewBox="0 0 44 50"><rect x="2" y="4" width="40" height="44" fill="none" stroke="#ececec" stroke-width="3"/><rect x="12" y="0" width="20" height="9" rx="2" fill="#ececec"/><path d="M9 11 H35 V36 L27 44 H9 Z" fill="#ececec"/></svg>
<div style="left:3715px;top:1537px;width:107px;height:2px;background:#2c2c2c"></div>
<div style="left:3715px;top:1550px;width:107px;height:101px;background:linear-gradient(#343434,#303030);border:3px solid #1c1c1c;border-radius:16px"></div>
<svg style="position:absolute;left:3750px;top:1588px;" width="38" height="24" viewBox="0 0 38 24"><path d="M2 3 H36 L19 21 Z" fill="#ececec"/><rect x="2" y="0" width="34" height="3" fill="#111"/></svg>
<div style="left:3715px;top:1662px;width:107px;height:2px;background:#2c2c2c"></div>
<div style="left:3px;top:1811px;width:99px;height:52px;background:#ffffff"></div>
<svg style="position:absolute;left:3px;top:1811px;" width="99" height="52" viewBox="0 0 99 52"><path d="M8 8 L50 48 L92 8" fill="none" stroke="#c8203a" stroke-width="7"/><circle cx="50" cy="58" r="14" fill="#bbb" opacity="0.8"/></svg>
<div style="left:105px;top:1811px;width:99px;height:52px;background:#000000;box-shadow:inset 0 0 0 3px #0a0a0a"></div>
<div style="left:207px;top:1811px;width:99px;height:52px;background:#808080;box-shadow:inset 0 0 0 3px #777"></div>
<div style="left:309px;top:1811px;width:99px;height:52px;background:#ffffff"></div>
<div style="left:410px;top:1811px;width:58px;height:47px;background:#1a1a1a;box-shadow:inset 0 0 0 3px #303030"></div>
<div style="left:410px;top:1861px;width:58px;height:2px;background:#d45500"></div>
<div style="left:470px;top:1811px;width:58px;height:47px;background:#333333;box-shadow:inset 0 0 0 3px #474747"></div>
<div style="left:470px;top:1861px;width:58px;height:2px;background:#ff6600"></div>
<div style="left:530px;top:1811px;width:58px;height:47px;background:#4d4d4d;box-shadow:inset 0 0 0 3px #5e5e5e"></div>
<div style="left:530px;top:1861px;width:58px;height:2px;background:#ff7f2a"></div>
<div style="left:590px;top:1811px;width:58px;height:47px;background:#666666;box-shadow:inset 0 0 0 3px #757575"></div>
<div style="left:590px;top:1861px;width:58px;height:2px;background:#ff9955"></div>
<div style="left:650px;top:1811px;width:58px;height:47px;background:#999999;box-shadow:inset 0 0 0 3px #a3a3a3"></div>
<div style="left:650px;top:1861px;width:58px;height:2px;background:#ffb380"></div>
<div style="left:710px;top:1811px;width:58px;height:47px;background:#b3b3b3;box-shadow:inset 0 0 0 3px #bababa"></div>
<div style="left:710px;top:1861px;width:58px;height:2px;background:#ffccaa"></div>
<div style="left:770px;top:1811px;width:58px;height:47px;background:#cccccc;box-shadow:inset 0 0 0 3px #d1d1d1"></div>
<div style="left:770px;top:1861px;width:58px;height:2px;background:#ffe6d5"></div>
<div style="left:830px;top:1811px;width:58px;height:47px;background:#e6e6e6;box-shadow:inset 0 0 0 3px #e8e8e8"></div>
<div style="left:830px;top:1861px;width:58px;height:2px;background:#28170b"></div>
<div style="left:890px;top:1811px;width:58px;height:47px;background:#ececec;box-shadow:inset 0 0 0 3px #ededed"></div>
<div style="left:890px;top:1861px;width:58px;height:2px;background:#502d16"></div>
<div style="left:950px;top:1811px;width:58px;height:47px;background:#f2f2f2;box-shadow:inset 0 0 0 3px #f3f3f3"></div>
<div style="left:950px;top:1861px;width:58px;height:2px;background:#784421"></div>
<div style="left:1010px;top:1811px;width:58px;height:47px;background:#f9f9f9;box-shadow:inset 0 0 0 3px #f9f9f9"></div>
<div style="left:1010px;top:1861px;width:58px;height:2px;background:#a05a2c"></div>
<div style="left:1070px;top:1811px;width:58px;height:47px;background:#800000;box-shadow:inset 0 0 0 3px #8c1919"></div>
<div style="left:1070px;top:1861px;width:58px;height:2px;background:#c87137"></div>
<div style="left:1130px;top:1811px;width:58px;height:47px;background:#ff0000;box-shadow:inset 0 0 0 3px #ff1919"></div>
<div style="left:1130px;top:1861px;width:58px;height:2px;background:#d38d5f"></div>
<div style="left:1190px;top:1811px;width:58px;height:47px;background:#808000;box-shadow:inset 0 0 0 3px #8c8c19"></div>
<div style="left:1190px;top:1861px;width:58px;height:2px;background:#deaa87"></div>
<div style="left:1250px;top:1811px;width:58px;height:47px;background:#ffff00;box-shadow:inset 0 0 0 3px #ffff19"></div>
<div style="left:1250px;top:1861px;width:58px;height:2px;background:#e9c6af"></div>
<div style="left:1310px;top:1811px;width:58px;height:47px;background:#008000;box-shadow:inset 0 0 0 3px #198c19"></div>
<div style="left:1310px;top:1861px;width:58px;height:2px;background:#f4e3d7"></div>
<div style="left:1370px;top:1811px;width:58px;height:47px;background:#00ff00;box-shadow:inset 0 0 0 3px #19ff19"></div>
<div style="left:1370px;top:1861px;width:58px;height:2px;background:#241f1c"></div>
<div style="left:1430px;top:1811px;width:58px;height:47px;background:#008080;box-shadow:inset 0 0 0 3px #198c8c"></div>
<div style="left:1430px;top:1861px;width:58px;height:2px;background:#483e37"></div>
<div style="left:1490px;top:1811px;width:58px;height:47px;background:#00ffff;box-shadow:inset 0 0 0 3px #19ffff"></div>
<div style="left:1490px;top:1861px;width:58px;height:2px;background:#6c5d53"></div>
<div style="left:1550px;top:1811px;width:58px;height:47px;background:#000080;box-shadow:inset 0 0 0 3px #19198c"></div>
<div style="left:1550px;top:1861px;width:58px;height:2px;background:#917c6f"></div>
<div style="left:1610px;top:1811px;width:58px;height:47px;background:#0000ff;box-shadow:inset 0 0 0 3px #1919ff"></div>
<div style="left:1610px;top:1861px;width:58px;height:2px;background:#ac9d93"></div>
<div style="left:1670px;top:1811px;width:58px;height:47px;background:#800080;box-shadow:inset 0 0 0 3px #8c198c"></div>
<div style="left:1670px;top:1861px;width:58px;height:2px;background:#c8beb7"></div>
<div style="left:1730px;top:1811px;width:58px;height:47px;background:#ff00ff;box-shadow:inset 0 0 0 3px #ff19ff"></div>
<div style="left:1730px;top:1861px;width:58px;height:2px;background:#e3dedb"></div>
<div style="left:1790px;top:1811px;width:58px;height:47px;background:#2b0000;box-shadow:inset 0 0 0 3px #401919"></div>
<div style="left:1790px;top:1861px;width:58px;height:2px;background:#2b2200"></div>
<div style="left:1850px;top:1811px;width:58px;height:47px;background:#550000;box-shadow:inset 0 0 0 3px #661919"></div>
<div style="left:1850px;top:1861px;width:58px;height:2px;background:#554400"></div>
<div style="left:1910px;top:1811px;width:58px;height:47px;background:#800000;box-shadow:inset 0 0 0 3px #8c1919"></div>
<div style="left:1910px;top:1861px;width:58px;height:2px;background:#806600"></div>
<div style="left:1970px;top:1811px;width:58px;height:47px;background:#aa0000;box-shadow:inset 0 0 0 3px #b21919"></div>
<div style="left:1970px;top:1861px;width:58px;height:2px;background:#aa8800"></div>
<div style="left:2030px;top:1811px;width:58px;height:47px;background:#d40000;box-shadow:inset 0 0 0 3px #d81919"></div>
<div style="left:2030px;top:1861px;width:58px;height:2px;background:#d4aa00"></div>
<div style="left:2090px;top:1811px;width:58px;height:47px;background:#ff0000;box-shadow:inset 0 0 0 3px #ff1919"></div>
<div style="left:2090px;top:1861px;width:58px;height:2px;background:#ffcc00"></div>
<div style="left:2150px;top:1811px;width:58px;height:47px;background:#ff2a2a;box-shadow:inset 0 0 0 3px #ff3f3f"></div>
<div style="left:2150px;top:1861px;width:58px;height:2px;background:#ffdd55"></div>
<div style="left:2210px;top:1811px;width:58px;height:47px;background:#ff5555;box-shadow:inset 0 0 0 3px #ff6666"></div>
<div style="left:2210px;top:1861px;width:58px;height:2px;background:#ffe680"></div>
<div style="left:2270px;top:1811px;width:58px;height:47px;background:#ff8080;box-shadow:inset 0 0 0 3px #ff8c8c"></div>
<div style="left:2270px;top:1861px;width:58px;height:2px;background:#ffeeaa"></div>
<div style="left:2330px;top:1811px;width:58px;height:47px;background:#ffaaaa;box-shadow:inset 0 0 0 3px #ffb2b2"></div>
<div style="left:2330px;top:1861px;width:58px;height:2px;background:#fff6d5"></div>
<div style="left:2390px;top:1811px;width:58px;height:47px;background:#ffd5d5;box-shadow:inset 0 0 0 3px #ffd9d9"></div>
<div style="left:2390px;top:1861px;width:58px;height:2px;background:#28220b"></div>
<div style="left:2450px;top:1811px;width:58px;height:47px;background:#280b0b;box-shadow:inset 0 0 0 3px #3d2323"></div>
<div style="left:2450px;top:1861px;width:58px;height:2px;background:#504416"></div>
<div style="left:2510px;top:1811px;width:58px;height:47px;background:#501616;box-shadow:inset 0 0 0 3px #612d2d"></div>
<div style="left:2510px;top:1861px;width:58px;height:2px;background:#786721"></div>
<div style="left:2570px;top:1811px;width:58px;height:47px;background:#782121;box-shadow:inset 0 0 0 3px #853737"></div>
<div style="left:2570px;top:1861px;width:58px;height:2px;background:#a0892c"></div>
<div style="left:2630px;top:1811px;width:58px;height:47px;background:#a02c2c;box-shadow:inset 0 0 0 3px #a94141"></div>
<div style="left:2630px;top:1861px;width:58px;height:2px;background:#c8ab37"></div>
<div style="left:2690px;top:1811px;width:58px;height:47px;background:#c83737;box-shadow:inset 0 0 0 3px #cd4b4b"></div>
<div style="left:2690px;top:1861px;width:58px;height:2px;background:#d4c26a"></div>
<div style="left:2750px;top:1811px;width:58px;height:47px;background:#d35f5f;box-shadow:inset 0 0 0 3px #d76f6f"></div>
<div style="left:2750px;top:1861px;width:58px;height:2px;background:#e3dbb0"></div>
<div style="left:2810px;top:1811px;width:58px;height:47px;background:#de8787;box-shadow:inset 0 0 0 3px #e19393"></div>
<div style="left:2810px;top:1861px;width:58px;height:2px;background:#f1eed9"></div>
<div style="left:2870px;top:1811px;width:58px;height:47px;background:#e9afaf;box-shadow:inset 0 0 0 3px #ebb7b7"></div>
<div style="left:2870px;top:1861px;width:58px;height:2px;background:#1c241c"></div>
<div style="left:2930px;top:1811px;width:58px;height:47px;background:#f4d7d7;box-shadow:inset 0 0 0 3px #f5dbdb"></div>
<div style="left:2930px;top:1861px;width:58px;height:2px;background:#374837"></div>
<div style="left:2990px;top:1811px;width:58px;height:47px;background:#241c1c;box-shadow:inset 0 0 0 3px #393232"></div>
<div style="left:2990px;top:1861px;width:58px;height:2px;background:#536c53"></div>
<div style="left:3050px;top:1811px;width:58px;height:47px;background:#483737;box-shadow:inset 0 0 0 3px #5a4b4b"></div>
<div style="left:3050px;top:1861px;width:58px;height:2px;background:#6f916f"></div>
<div style="left:3110px;top:1811px;width:58px;height:47px;background:#6c5353;box-shadow:inset 0 0 0 3px #7a6464"></div>
<div style="left:3110px;top:1861px;width:58px;height:2px;background:#93ac93"></div>
<div style="left:3170px;top:1811px;width:58px;height:47px;background:#917070;box-shadow:inset 0 0 0 3px #9c7e7e"></div>
<div style="left:3170px;top:1861px;width:58px;height:2px;background:#b7c8b7"></div>
<div style="left:3230px;top:1811px;width:58px;height:47px;background:#ac9393;box-shadow:inset 0 0 0 3px #b49d9d"></div>
<div style="left:3230px;top:1861px;width:58px;height:2px;background:#dbe3db"></div>
<div style="left:3290px;top:1811px;width:58px;height:47px;background:#c8b7b7;box-shadow:inset 0 0 0 3px #cdbebe"></div>
<div style="left:3290px;top:1861px;width:58px;height:2px;background:#112b00"></div>
<div style="left:3350px;top:1811px;width:58px;height:47px;background:#e3dbdb;box-shadow:inset 0 0 0 3px #e5dede"></div>
<div style="left:3350px;top:1861px;width:58px;height:2px;background:#225500"></div>
<div style="left:3410px;top:1811px;width:58px;height:47px;background:#2b1100;box-shadow:inset 0 0 0 3px #402819"></div>
<div style="left:3410px;top:1861px;width:58px;height:2px;background:#338000"></div>
<div style="left:3472px;top:1811px;width:54px;height:47px;background:#552200;box-shadow:inset 0 0 0 3px #663819"></div>
<div style="left:3472px;top:1861px;width:54px;height:2px;background:#44aa00"></div>
<div style="left:3529px;top:1811px;width:54px;height:47px;background:#803300;box-shadow:inset 0 0 0 3px #8c4719"></div>
<div style="left:3529px;top:1861px;width:54px;height:2px;background:#55d400"></div>
<div style="left:3586px;top:1811px;width:54px;height:47px;background:#aa4400;box-shadow:inset 0 0 0 3px #b25619"></div>
<div style="left:3586px;top:1861px;width:54px;height:2px;background:#66ff00"></div>
<svg style="position:absolute;left:3655px;top:1844px;" width="40" height="25" viewBox="0 0 40 25"><path d="M4 22 L20 8 L36 22" fill="none" stroke="#8a8a8a" stroke-width="5"/></svg>
<svg style="position:absolute;left:3722px;top:1838px;" width="44" height="25" viewBox="0 0 44 25"><path d="M4 4 L22 22 L40 4" fill="none" stroke="#ececec" stroke-width="5"/></svg>
<div style="left:3787px;top:1851px;width:44px;height:5px;background:#ececec"></div>
<div style="left:521px;top:114px;width:550px;height:1580px;background:rgba(0,0,0,0.25);filter:blur(7px)"></div>
<svg style="position:absolute;left:484px;top:101px;" width="590" height="1590" viewBox="0 0 590 1590"><path d="M36.75 1.75 H585.25 V1585.25 H36.75 V636 L3.5 602 L36.75 568 Z" fill="#353535" stroke="#1e1e1e" stroke-width="3.5" stroke-linejoin="miter"/></svg>
<div class="t" style="left:616px;top:150.4px;font-size:35px;line-height:35px;color:#f0f0f0;">Cut</div>
<div class="t" style="left:616px;top:228.4px;font-size:35px;line-height:35px;color:#f0f0f0;">Copy</div>
<div class="t" style="left:616px;top:306.4px;font-size:35px;line-height:35px;color:#f0f0f0;">Paste</div>
<div class="t" style="left:616px;top:404.4px;font-size:35px;line-height:35px;color:#f0f0f0;">Duplicate</div>
<div class="t" style="left:616px;top:482.4px;font-size:35px;line-height:35px;color:#f0f0f0;">Clone</div>
<div class="t" style="left:616px;top:561.4px;font-size:35px;line-height:35px;color:#f0f0f0;">Delete</div>
<div class="t" style="left:616px;top:660.4px;font-size:35px;line-height:35px;color:#f0f0f0;">Layers and Objects...</div>
<div class="t" style="left:616px;top:739.4px;font-size:35px;line-height:35px;color:#f0f0f0;">Object Properties...</div>
<div class="t" style="left:616px;top:817.4px;font-size:35px;line-height:35px;color:#f0f0f0;">Fill and Stroke...</div>
<div class="t" style="left:616px;top:916.4px;font-size:35px;line-height:35px;color:#f0f0f0;">Select Same</div>
<div class="t" style="left:616px;top:1016.4px;font-size:35px;line-height:35px;color:#f0f0f0;">Move to Layer...</div>
<div class="t" style="left:616px;top:1094.4px;font-size:35px;line-height:35px;color:#f0f0f0;">Create Anchor (Hyperlink)</div>
<div class="t" style="left:616px;top:1171.4px;font-size:35px;line-height:35px;color:#f0f0f0;">Group</div>
<div class="t" style="left:616px;top:1250.4px;font-size:35px;line-height:35px;color:#f0f0f0;">Exit Group</div>
<div class="t" style="left:616px;top:1328.4px;font-size:35px;line-height:35px;color:#f0f0f0;">Pop Selection out of Group</div>
<div class="t" style="left:616px;top:1427.4px;font-size:35px;line-height:35px;color:#f0f0f0;">Set Clip Group</div>
<div class="t" style="left:616px;top:1525.4px;font-size:35px;line-height:35px;color:#f0f0f0;">Hide Selected Objects</div>
<div class="t" style="left:616px;top:1603.4px;font-size:35px;line-height:35px;color:#f0f0f0;">Lock Selected Objects</div>
<div style="left:543px;top:373px;width:504px;height:3px;background:#2e2e2e"></div>
<div style="left:543px;top:629px;width:504px;height:3px;background:#2e2e2e"></div>
<div style="left:543px;top:884px;width:504px;height:3px;background:#2e2e2e"></div>
<div style="left:543px;top:984px;width:504px;height:3px;background:#2e2e2e"></div>
<div style="left:543px;top:1395px;width:504px;height:3px;background:#2e2e2e"></div>
<div style="left:543px;top:1493px;width:504px;height:3px;background:#2e2e2e"></div>
<svg style="position:absolute;left:1007px;top:916px;" width="22" height="44" viewBox="0 0 22 44"><path d="M2 2 L20 22 L2 42 Z" fill="#ececec"/></svg>
<svg style="position:absolute;left:547px;top:143px;" width="52" height="52" viewBox="0 0 52 52"><path d="M10 2 L34 36 M40 2 L16 36" stroke="#ececec" stroke-width="5.5"/><circle cx="11" cy="41" r="7.5" fill="none" stroke="#ececec" stroke-width="5.5"/><circle cx="39" cy="41" r="7.5" fill="none" stroke="#ececec" stroke-width="5.5"/></svg>
<svg style="position:absolute;left:549px;top:223px;" width="48" height="48" viewBox="0 0 48 48"><rect x="0" y="0" width="32" height="32" fill="#ececec"/><rect x="13" y="13" width="35" height="35" fill="#353535"/><rect x="16" y="16" width="32" height="32" fill="#ececec"/></svg>
<svg style="position:absolute;left:549px;top:303px;" width="44" height="46" viewBox="0 0 44 46"><rect x="1.5" y="5" width="40" height="39.5" fill="none" stroke="#ececec" stroke-width="3"/><rect x="12" y="0" width="19" height="9" rx="2" fill="#ececec"/><path d="M9 11 H34 V35 L27 42 H9 Z" fill="#ececec"/></svg>
<svg style="position:absolute;left:549px;top:402px;" width="48" height="48" viewBox="0 0 48 48"><rect x="0" y="0" width="30" height="30" fill="#ececec"/><rect x="13" y="13" width="35" height="35" fill="#353535"/><rect x="15" y="16" width="30" height="30" fill="#0a9a0a"/></svg>
<svg style="position:absolute;left:549px;top:480px;" width="48" height="48" viewBox="0 0 48 48"><rect x="0" y="0" width="30" height="30" fill="#ececec"/><rect x="13" y="13" width="35" height="35" fill="#353535"/><rect x="15" y="16" width="30" height="32" fill="#ececec"/><path d="M24 32 V27 a6 6 0 0 1 12 0 V32" fill="none" stroke="#353535" stroke-width="3"/><rect x="21" y="31" width="18" height="12" fill="#353535"/></svg>
<svg style="position:absolute;left:554px;top:558px;" width="40" height="40" viewBox="0 0 40 40"><path d="M12 5 a3 3 0 0 1 3 -3 h8 a3 3 0 0 1 3 3 v2" fill="none" stroke="#ececec" stroke-width="3"/><rect x="1" y="6" width="36" height="6" rx="2" fill="#ececec"/><path d="M4 14 H34 L31 37 a2 2 0 0 1 -2 2 H9 a2 2 0 0 1 -2 -2 Z" fill="#ececec"/><path d="M13 18 V34 M19 18 V34 M25 18 V34" stroke="#353535" stroke-width="3"/></svg>
<svg style="position:absolute;left:549px;top:660px;" width="50" height="42" viewBox="0 0 50 42"><path d="M9 1 H37 L28 10 H1 Z" fill="#0099e6"/><path d="M15 16 H43 L34 25 H7 Z" fill="#78c6ee"/><path d="M21 31 H49 L40 40 H13 Z" fill="#e8e8e8"/></svg>
<svg style="position:absolute;left:547px;top:731px;" width="52" height="52" viewBox="0 0 52 52"><rect x="2" y="28" width="22" height="22" fill="#ececec"/><g fill="#0a9a0a"><path d="M12 10 L40 34" stroke="#0a9a0a" stroke-width="7"/><circle cx="12" cy="10" r="8.5"/><circle cx="41" cy="35" r="8.5"/></g><path d="M6 2 L14 10" stroke="#353535" stroke-width="6"/><path d="M47 43 L39 35" stroke="#353535" stroke-width="6"/></svg>
<svg style="position:absolute;left:547px;top:810px;" width="52" height="52" viewBox="0 0 52 52"><path d="M3 48 V4 H38" fill="none" stroke="#ececec" stroke-width="3.5"/><path d="M20 38 L44 10 L49 14 L27 42 Z" fill="#ececec"/><path d="M8 52 Q10 40 20 40 Q25 46 18 50 Z" fill="#1a9ae8"/></svg>
<svg style="position:absolute;left:440px;top:336px;" width="410" height="185" viewBox="0 0 410 185"><path d="M 332 34 L 90 34 Q 72 34 57 51 Q 34 74 34 99 Q 34 132 72 138 Q 100 142 160 140 Q 210 140 260 148 Q 330 156 360 132 Q 374 112 374 76 Q 374 44 352 42 L 336 42" fill="none" stroke="#24e304" stroke-width="36" stroke-linecap="round" stroke-linejoin="round"/></svg>
<svg style="position:absolute;left:0px;top:0px;" width="64" height="64" viewBox="0 0 64 64"><defs><linearGradient id="lg" x1="0" y1="0" x2="1" y2="1"><stop offset="0" stop-color="#ffffff"/><stop offset="0.5" stop-color="#b8bcc4"/><stop offset="1" stop-color="#6a88b0"/></linearGradient></defs><path d="M26 11 L47.5 31 Q49 34 45 36 L32 40 L36 44 L30 49 L28 53 L24 52 L19 48 L12 45 L10 41 L16 38 L7 34 Q3 32 5 30 Z" fill="#000"/><path d="M26 12.5 L46 31 Q46.5 33.5 44 34.5 L30 37 L16 35 L7 32 Q5.5 31 6.5 29.5 Z" fill="url(#lg)"/><path d="M13 27 L21 24 L22 22 L24 27 L29 25 L35 25 L37 24 L38 33 L33 38 L26 37 L16 35 Z" fill="#000"/><path d="M14 40 Q20 37 28 40 Q26 41 20 41 Z" fill="#9a9a9a"/><path d="M28 42 L36 44 L30 50 Z" fill="#3a5070"/><circle cx="15" cy="47.5" r="2" fill="#000"/><circle cx="40.5" cy="47.5" r="1.6" fill="#000"/><circle cx="44" cy="43.5" r="2.2" fill="#000"/></svg>
</body></html>
